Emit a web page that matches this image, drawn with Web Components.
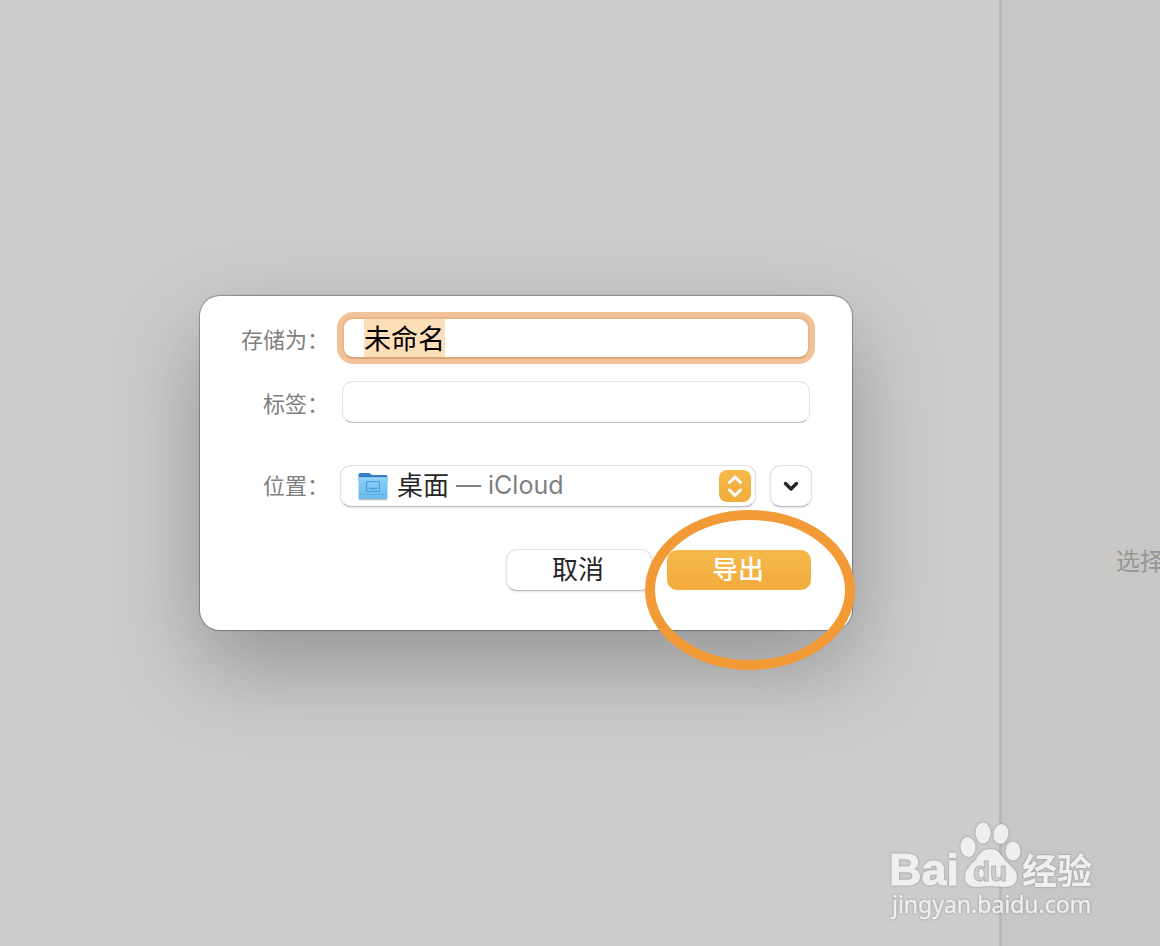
<!DOCTYPE html>
<html lang="zh-CN">
<head>
<meta charset="utf-8">
<title>存储</title>
<style>
  html, body {
    height: 100%;
    margin: 0;
  }

  body {
    font-family: Inter, "Noto Sans CJK SC", sans-serif;
    font-size: 26px;
    color: #262626;
    overflow: hidden;
  }
</style>
</head>
<body>
<split-window>
  <p slot="side">选择</p>
  <save-sheet slot="sheet">
    <text-field label="存储为：" value="未命名" active></text-field>
    <text-field label="标签："></text-field>
    <place-picker label="位置：" place="桌面" account="iCloud"></place-picker>
    <push-button slot="actions">取消</push-button>
    <push-button slot="actions" primary>导出</push-button>
    <highlight-ring slot="mark"></highlight-ring>
  </save-sheet>
  <site-mark slot="mark"></site-mark>
</split-window>

<script>
function makeTemplate(html) {
  const template = document.createElement("template");
  template.innerHTML = html;
  return template;
}

function attach(host, template) {
  host.attachShadow({ mode: "open" });
  host.shadowRoot.appendChild(template.content.cloneNode(true));
}

const windowTemplate = makeTemplate(`
<style>
  :host {
    display: flex;
    position: relative;
    height: 100%;
    min-height: 700px;
    background: #cccccc;
    overflow: hidden;
  }

  main {
    flex: 1;
  }

  aside {
    width: 161px;
    box-sizing: border-box;
    border-left: 3px solid #b8b8b7;
    display: flex;
    align-items: center;
    background: #c8c7c5;
    color: #969593;
    font-size: 24px;
    line-height: 36px;
    overflow: hidden;
  }

  ::slotted(p) {
    margin: 0;
    white-space: nowrap;
  }

  .label {
    margin: 178px -4px 0 auto;
  }

  ::slotted(save-sheet) {
    position: absolute;
    top: 296px;
    left: 200px;
  }

  ::slotted(site-mark) {
    position: absolute;
    right: 60px;
    bottom: 22px;
  }
</style>
<main><slot></slot></main>
<aside><div class="label"><slot name="side"></slot></div></aside>
<slot name="sheet"></slot>
<slot name="mark"></slot>
`);

class SplitWindow extends HTMLElement {
  constructor() {
    super();
    attach(this, windowTemplate);
  }
}

const sheetTemplate = makeTemplate(`
<style>
  :host {
    display: block;
    width: 652px;
    box-sizing: border-box;
    padding: 21px 40px 39px 41px;
    background: #ffffff;
    border-radius: 20px;
    box-shadow: 0 0 1px 1px rgba(0, 0, 0, 0.3), 0 36px 90px rgba(0, 0, 0, 0.28);
  }

  form {
    display: flex;
    flex-direction: column;
    gap: 22px;
  }

  ::slotted(place-picker) {
    margin-top: 20px;
  }

  .actions {
    display: flex;
    justify-content: flex-end;
    gap: 14px;
    margin-top: 20px;
  }

  ::slotted(highlight-ring) {
    position: absolute;
    right: -3px;
    bottom: -40px;
  }
</style>
<form>
  <slot></slot>
  <div class="actions"><slot name="actions"></slot></div>
</form>
<slot name="mark"></slot>
`);

class SaveSheet extends HTMLElement {
  constructor() {
    super();
    attach(this, sheetTemplate);
  }
}

// label column and control frame, used by every row of the sheet
const rowStyle = `
  :host {
    display: grid;
    grid-template-columns: 88px 1fr;
    column-gap: 11px;
    align-items: center;
  }

  label {
    padding-top: 4px;
    color: #808080;
    font-size: 22px;
    line-height: 32px;
    text-align: right;
    white-space: nowrap;
  }
`;

const fieldTemplate = makeTemplate(`
<style>
  ${rowStyle}

  input {
    min-width: 0;
    height: 42px;
    box-sizing: border-box;
    margin: 0 2px;
    padding: 0 21px 2px;
    border: 1px solid #e4e4e4;
    border-bottom-color: #bcbcbc;
    border-radius: 11px;
    outline: none;
    background: #ffffff;
    color: #000000;
    caret-color: transparent;
    font-family: inherit;
    font-size: 27px;
    line-height: 32px;
  }

  :host([active]) input {
    border: 2px solid #e9b78b;
    border-bottom-color: #dba679;
    padding: 2px 20px 4px;
    box-shadow: 0 0 0 5px #f2c398;
  }

  input::selection {
    background: #fcdfb8;
    color: #000000;
  }
</style>
<label for="field"></label>
<input id="field" type="text" autocomplete="off" spellcheck="false">
`);

class TextField extends HTMLElement {
  constructor() {
    super();
    attach(this, fieldTemplate);
  }

  connectedCallback() {
    const input = this.shadowRoot.querySelector("input");
    this.shadowRoot.querySelector("label").textContent = this.getAttribute("label");
    input.value = this.getAttribute("value") || "";

    if (this.hasAttribute("active")) {
      input.focus();
      input.select();
    }
  }
}

const pickerTemplate = makeTemplate(`
<style>
  ${rowStyle}

  label {
    padding-top: 0;
  }

  .controls {
    display: flex;
    gap: 14px;
  }

  .popup {
    flex: 1;
    display: grid;
    align-items: center;
  }

  .popup > * {
    grid-area: 1 / 1;
  }

  select,
  button {
    height: 42px;
    box-sizing: border-box;
    border: 1px solid #e2e2e2;
    border-bottom-color: #c0c0c0;
    border-radius: 11px;
    background: #ffffff;
    box-shadow: 0 1px 2px rgba(0, 0, 0, 0.12);
  }

  select {
    appearance: none;
    width: 100%;
    padding: 0 0 2px 56px;
    color: #262626;
    font-family: inherit;
    font-size: 26px;
    outline: none;
  }

  .face {
    display: flex;
    align-items: center;
    padding: 0 5px 0 17px;
    pointer-events: none;
  }

  .account {
    flex: 1;
    padding: 0 0 2px 67px;
    color: #7f7f7f;
    font-size: 25px;
    line-height: 32px;
    white-space: nowrap;
  }

  svg {
    display: block;
  }

  button {
    width: 42px;
    padding: 0;
    display: grid;
    place-items: center;
  }
</style>
<label for="place"></label>
<div class="controls">
  <div class="popup">
    <select id="place"><option></option></select>
    <div class="face">
      <svg width="32" height="32" viewBox="0 0 32 32" aria-hidden="true">
        <defs>
          <linearGradient id="front" x1="0" y1="0" x2="0" y2="1">
            <stop offset="0" stop-color="#8bd0f8"/>
            <stop offset="1" stop-color="#68b9ec"/>
          </linearGradient>
        </defs>
        <path d="M2 29.500h28" stroke="#000" stroke-opacity=".25" stroke-width="1.500"/>
        <path d="M1.500 4.500q0-1.500 1.500-1.500h8q1.500 0 2.500 1t2.500 1h13q1.500 0 1.500 1.500v5h-29z" fill="#3580c4"/>
        <path d="M1.500 8.500q0-1 1-1h27q1 0 1 1V28q0 1-1 1h-27q-1 0-1-1z" fill="url(#front)"/>
        <path d="M2 8h28" stroke="#a5dcfb"/>
        <path d="M2 24.500h28" stroke="#5eaee0"/>
        <rect x="9.500" y="11.500" width="13" height="10" rx="1" fill="none" stroke="#4a9fd8" stroke-width="1.200"/>
        <path d="M12 18.500h8" stroke="#4a9fd8" stroke-width="1.500"/>
      </svg>
      <span class="account"></span>
      <svg width="32" height="32" viewBox="0 0 32 32" aria-hidden="true">
        <defs>
          <linearGradient id="amber" x1="0" y1="0" x2="0" y2="1">
            <stop offset="0" stop-color="#f5b94b"/>
            <stop offset="1" stop-color="#f2ab3c"/>
          </linearGradient>
        </defs>
        <rect width="32" height="32" rx="8" fill="url(#amber)"/>
        <path d="M10.500 12.500L16 7l5.500 5.500M10.500 20L16 25.500l5.500-5.500" fill="none" stroke="#fff" stroke-width="3" stroke-linecap="round" stroke-linejoin="round"/>
      </svg>
    </div>
  </div>
  <button type="button" aria-label="展开">
    <svg width="20" height="20" viewBox="0 0 20 20" aria-hidden="true">
      <path d="M4.500 7.500L10 13l5.500-5.500" fill="none" stroke="#262626" stroke-width="3.400" stroke-linecap="round" stroke-linejoin="round"/>
    </svg>
  </button>
</div>
`);

class PlacePicker extends HTMLElement {
  constructor() {
    super();
    attach(this, pickerTemplate);
  }

  connectedCallback() {
    this.shadowRoot.querySelector("label").textContent = this.getAttribute("label");
    this.shadowRoot.querySelector("option").textContent = this.getAttribute("place");
    this.shadowRoot.querySelector(".account").textContent = "— " + this.getAttribute("account");
  }
}

const buttonTemplate = makeTemplate(`
<style>
  :host {
    display: block;
    width: 146px;
  }

  button {
    width: 100%;
    height: 42px;
    padding: 0 2px 0 0;
    box-sizing: border-box;
    border: 1px solid #e2e2e2;
    border-bottom-color: #c0c0c0;
    border-radius: 11px;
    background: #ffffff;
    box-shadow: 0 1px 2px rgba(0, 0, 0, 0.12);
    color: #262626;
    font-family: inherit;
    font-size: 26px;
    line-height: 36px;
  }

  :host([primary]) button {
    border-color: transparent;
    background: linear-gradient(#f5b94b, #f2ab3c) padding-box;
    box-shadow: none;
    color: #ffffff;
    font-weight: 500;
  }
</style>
<button type="button"><slot></slot></button>
`);

class PushButton extends HTMLElement {
  constructor() {
    super();
    attach(this, buttonTemplate);
  }
}

const ringTemplate = makeTemplate(`
<style>
  :host {
    display: block;
    width: 210px;
    height: 160px;
    pointer-events: none;
  }

  svg {
    display: block;
  }
</style>
<svg width="210" height="160" viewBox="0 0 210 160" aria-hidden="true">
  <ellipse cx="105" cy="80" rx="100" ry="75" fill="none" stroke="#f29b36" stroke-width="10"/>
</svg>
`);

class HighlightRing extends HTMLElement {
  constructor() {
    super();
    attach(this, ringTemplate);
  }
}

const markTemplate = makeTemplate(`
<style>
  :host {
    display: block;
    pointer-events: none;
  }

  svg {
    display: block;
    filter: drop-shadow(0 0 1px rgba(0, 0, 0, 0.3));
  }
</style>
<svg width="212" height="104" viewBox="0 0 212 104">
  <g fill="#efefef">
    <text x="1" y="65" font-family="Liberation Sans" font-weight="700" font-size="45" stroke="#efefef">Bai</text>
    <ellipse cx="80" cy="27" rx="7.500" ry="10" transform="rotate(-6 80 27)"/>
    <ellipse cx="95" cy="13" rx="7.500" ry="10.500"/>
    <ellipse cx="113" cy="14" rx="7.500" ry="10" transform="rotate(10 113 14)"/>
    <ellipse cx="125" cy="31" rx="7.500" ry="9.500"/>
    <path d="M102 29c7 0 10 4 14 10s13 9 13 18c0 7-6 10-13 10-5 0-9-1-14-1s-8 1-13 1c-7 0-12-3-12-10 0-9 7-12 11-18s7-10 14-10z"/>
    <text x="134" y="64" font-family="Noto Sans CJK SC" font-weight="700" font-size="35">经验</text>
    <text x="4" y="93" font-family="Noto Sans" font-size="23" stroke="#efefef" stroke-width=".4">jingyan.baidu.com</text>
  </g>
  <text x="85" y="61" font-family="Liberation Sans" font-weight="700" font-size="28" fill="#cfcfce" stroke="#b4b4b3">du</text>
</svg>
`);

class SiteMark extends HTMLElement {
  constructor() {
    super();
    attach(this, markTemplate);
  }
}

window.customElements.define("split-window", SplitWindow);
window.customElements.define("save-sheet", SaveSheet);
window.customElements.define("text-field", TextField);
window.customElements.define("place-picker", PlacePicker);
window.customElements.define("push-button", PushButton);
window.customElements.define("highlight-ring", HighlightRing);
window.customElements.define("site-mark", SiteMark);
</script>
</body>
</html>
